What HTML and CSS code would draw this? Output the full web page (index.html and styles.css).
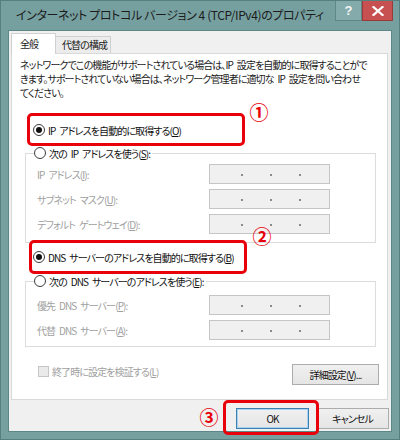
FILE: index.html
```html
<!DOCTYPE html>
<html lang="ja">
<head>
<meta charset="utf-8">
<link rel="stylesheet" href="styles.css">
</head>
<body>
<div class="window">
  <div class="titlebar">
    <div class="title">インターネット プロトコル バージョン 4 (TCP/IPv4)のプロパティ</div>
    <div class="caption-btns">
      <div class="cbtn help">?</div>
      <div class="cbtn close"><svg width="12" height="10" viewBox="0 0 12 10"><path d="M1.5 1 L10.5 9 M10.5 1 L1.5 9" stroke="#fff" stroke-width="2.2" stroke-linecap="square"/></svg></div>
    </div>
  </div>
  <div class="client">
    <div class="tabs">
      <div class="tab active">全般</div>
      <div class="tab">代替の構成</div>
    </div>
    <div class="panel">
      <p class="desc">ネットワークでこの機能がサポートされている場合は、IP 設定を自動的に取得することがで<br>きます。サポートされていない場合は、ネットワーク管理者に適切な IP 設定を問い合わせ<br>てください。</p>
      <div class="radio-row r1"><span class="radio on"></span>IP アドレスを自動的に取得する(<u>O</u>)</div>
      <fieldset class="group g1">
        <legend><span class="radio"></span>次の IP アドレスを使う(<u>S</u>):</legend>
        <div class="field-row"><span class="lbl">IP アドレス(<u>I</u>):</span><span class="ipbox"><i></i><i></i><i></i></span></div>
        <div class="field-row"><span class="lbl">サブネット マスク(<u>U</u>):</span><span class="ipbox"><i></i><i></i><i></i></span></div>
        <div class="field-row"><span class="lbl">デフォルト ゲートウェイ(<u>D</u>):</span><span class="ipbox"><i></i><i></i><i></i></span></div>
      </fieldset>
      <div class="radio-row r2"><span class="radio on"></span>DNS サーバーのアドレスを自動的に取得する(<u>B</u>)</div>
      <fieldset class="group g2">
        <legend><span class="radio"></span>次の DNS サーバーのアドレスを使う(<u>E</u>):</legend>
        <div class="field-row"><span class="lbl">優先 DNS サーバー(<u>P</u>):</span><span class="ipbox"><i></i><i></i><i></i></span></div>
        <div class="field-row"><span class="lbl">代替 DNS サーバー(<u>A</u>):</span><span class="ipbox"><i></i><i></i><i></i></span></div>
      </fieldset>
      <div class="bottom-row">
        <div class="check"><span class="cb"></span>終了時に設定を検証する(<u>L</u>)</div>
        <div class="btn adv">詳細設定(<u>V</u>)...</div>
      </div>
    </div>
    <div class="footer">
      <div class="btn ok">OK</div>
      <div class="btn">キャンセル</div>
    </div>
  </div>
  <div class="mark box1"></div>
  <div class="mark box2"></div>
  <div class="mark box3"></div>
  <div class="num n1">①</div>
  <div class="num n2">②</div>
  <div class="num n3">③</div>
</div>
</body>
</html>
```

FILE: styles.css
```css
* { box-sizing: border-box; }
html, body { margin: 0; padding: 0; background: #fff; }
body {
  font-family: "Noto Sans CJK JP", "Noto Sans", sans-serif;
  font-size: 10px;
  letter-spacing: -0.9px;
  word-spacing: 2.5px;
  color: #1a1a1a;
  font-feature-settings: "palt";
}
u { text-decoration-thickness: 1px; text-underline-offset: 1px; }

.window {
  position: relative;
  width: 400px;
  height: 440px;
  background: #76a0a0;
  border: 1px solid #56807f;
  display: flex;
  flex-direction: column;
}
.titlebar {
  height: 29px;
  display: flex;
  align-items: flex-start;
  justify-content: space-between;
}
.title {
  padding: 4px 0 0 15px;
  font-size: 12px;
  letter-spacing: -0.4px;
  word-spacing: 0;
  line-height: 20px;
  color: #1c1c1c;
  white-space: nowrap;
}
.caption-btns { display: flex; margin-right: 6px; flex: none; }
.cbtn {
  height: 20px;
  display: flex;
  align-items: center;
  justify-content: center;
  color: #fff;
}
.help {
  width: 27px;
  background: #84abab;
  border: 1px solid #5e8787;
  border-top: none;
  font-family: "Liberation Sans", sans-serif;
  font-weight: bold;
  font-size: 13px;
  letter-spacing: 0;
  color: #f4f4f4;
}
.close {
  width: 31px;
  background: #c75050;
  border: 1px solid #9c3a3a;
  border-top: none;
}

.client {
  margin: 0 7px 7px 7px;
  flex: 1;
  background: #f0f0f0;
  border: 1px solid #5d8686;
  padding: 2px 2px 0 2px;
  display: flex;
  flex-direction: column;
}
.tabs {
  display: flex;
  align-items: flex-end;
  height: 21px;
  margin-bottom: -1px;
  position: relative;
  z-index: 1;
}
.tab {
  height: 17px;
  width: 56px;
  padding: 0 0 0 6px;
  border: 1px solid #d0d0d0;
  border-bottom: none;
  background: #ececec;
  line-height: 15px;
  margin-left: -1px;
  margin-bottom: 1px;
  white-space: nowrap;
}
.tab.active {
  height: 21px;
  width: 45px;
  margin-left: 0;
  margin-bottom: 0;
  background: #fff;
  line-height: 20px;
  padding: 0 0 0 8px;
  z-index: 2;
  position: relative;
}

.panel {
  width: 377px;
  height: 347px;
  background: #fff;
  border: 1px solid #d9d9d9;
  padding: 4px 8px;
}
.desc {
  margin: 0;
  line-height: 14px;
  white-space: nowrap;
}
.radio-row {
  display: flex;
  align-items: center;
  height: 16px;
  padding-left: 13px;
  color: #111;
}
.r1 { margin-top: 22px; }
.r2 { margin-top: 6px; }
.radio {
  width: 12px;
  height: 12px;
  border-radius: 50%;
  border: 1px solid #3c3c3c;
  background: #fff;
  margin-right: 3px;
  display: inline-flex;
  align-items: center;
  justify-content: center;
  flex: none;
}
.radio.on::after {
  content: "";
  width: 6px;
  height: 6px;
  border-radius: 50%;
  background: #111;
}
.group {
  margin: 7px 0 0 5px;
  width: 351px;
  border: 1px solid #dcdcdc;
  padding: 3px 0 8px 11px;
  display: grid;
  row-gap: 5px;
}
.g2 { margin-top: 8px; padding-top: 6px; padding-bottom: 6px; }
.group legend {
  margin-left: -3px;
  padding: 0 2px 0 0;
  display: flex;
  align-items: center;
  height: 16px;
  color: #111;
  background: #fff;
}
.field-row {
  display: grid;
  grid-template-columns: 172px 121px;
  align-items: center;
  height: 20px;
}
.lbl {
  color: #a0a0a0;
  white-space: nowrap;
}
.ipbox {
  height: 20px;
  border: 1px solid #c5c5c5;
  background: #f0f0f0;
  display: grid;
  grid-template-columns: 2px 2px 2px;
  justify-content: space-between;
  align-content: end;
  padding: 0 28px 7px 31px;
}
.ipbox i {
  width: 2px;
  height: 2px;
  background: #8a8a8a;
}
.bottom-row {
  display: flex;
  justify-content: space-between;
  align-items: flex-start;
  margin-top: 17px;
  width: 359px;
}
.check {
  display: flex;
  align-items: center;
  margin: 0 0 0 18px;
  height: 15px;
  color: #a0a0a0;
}
.cb {
  width: 11px;
  height: 11px;
  border: 1px solid #c6c6c6;
  background: #eaeaea;
  margin-right: 3px;
}
.btn {
  height: 21px;
  border: 1px solid #acacac;
  background: linear-gradient(#f0f0f0, #e5e5e5);
  display: flex;
  align-items: center;
  justify-content: center;
  color: #111;
  white-space: nowrap;
}
.adv { width: 87px; }
.footer {
  display: flex;
  justify-content: flex-end;
  gap: 7px;
  margin-top: 8px;
}
.footer .btn { width: 73px; }
.ok { border-color: #3c7fb1; box-shadow: inset 0 0 0 1px #a8d2f0; }

.mark {
  position: absolute;
  border: 3px solid #e8000b;
  border-radius: 5px;
}
.box1 { left: 26px; top: 112px; width: 218px; height: 33px; }
.box2 { left: 28px; top: 239px; width: 218px; height: 34px; }
.box3 { left: 222px; top: 399px; width: 96px; height: 35px; }
.num {
  position: absolute;
  color: #e8000b;
  font-size: 19px;
  font-weight: bold;
  letter-spacing: 0;
  line-height: 20px;
  width: 20px;
  text-align: center;
  font-feature-settings: normal;
}
.n1 { left: 248px; top: 101px; }
.n2 { left: 251px; top: 225px; }
.n3 { left: 198px; top: 406px; }
```
